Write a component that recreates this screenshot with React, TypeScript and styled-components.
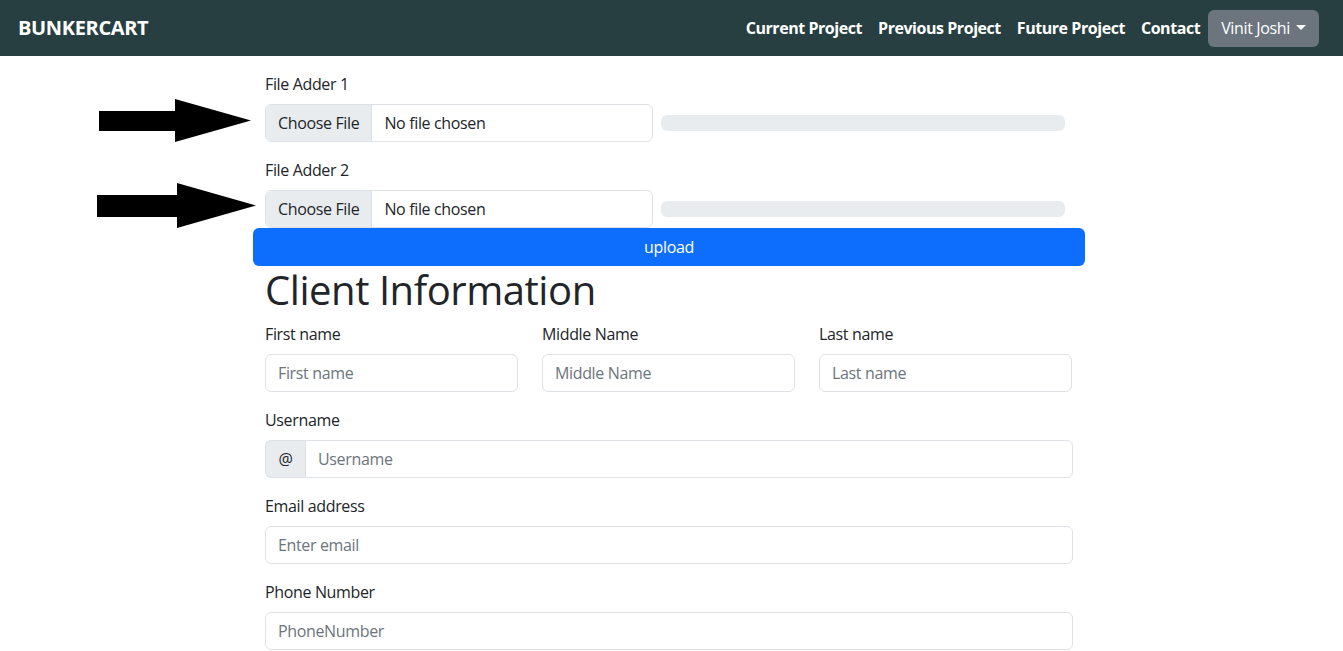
import React from "react";
import styled, { createGlobalStyle } from "styled-components";

const FONT = `"Segoe UI", "Open Sans", "Noto Sans", sans-serif`;

const Global = createGlobalStyle`
  * { box-sizing: border-box; }
  body {
    margin: 0;
    font-family: ${FONT};
    font-size: 16px;
    line-height: 1.5;
    letter-spacing: -0.35px;
    color: #212529;
    background: #fff;
  }
  input, button { letter-spacing: inherit; }
`;

const Nav = styled.nav`
  height: 56px;
  background: #283f42;
  display: flex;
  align-items: center;
  justify-content: space-between;
  padding: 0 24px 0 18px;
`;

const Brand = styled.a`
  color: #fff;
  font-weight: 700;
  font-size: 20px;
  text-decoration: none;
`;

const NavLinks = styled.div`
  display: flex;
  align-items: center;
`;

const NavLink = styled.a`
  color: #fff;
  font-weight: 700;
  padding: 8px;
  text-decoration: none;
  letter-spacing: -0.45px;
`;

const UserButton = styled.button`
  display: flex;
  align-items: center;
  gap: 4px;
  height: 37px;
  padding: 0 13px;
  border: none;
  border-radius: 6px;
  background: #6c757d;
  color: #fff;
  font-family: ${FONT};
  font-size: 16px;
`;

const Caret = styled.span`
  width: 0;
  height: 0;
  border-left: 5px solid transparent;
  border-right: 5px solid transparent;
  border-top: 5px solid #fff;
  margin-left: 2px;
  margin-top: -2px;
`;

const Main = styled.main`
  width: 832px;
  margin-left: 253px;
  padding-top: 16px;
`;

const Section = styled.div`
  padding: 0 12px;
`;

const Field = styled.div<{ $mb?: number }>`
  margin-bottom: ${(p) => (p.$mb ?? 16)}px;
`;

const Label = styled.label`
  display: block;
  margin-bottom: 8px;
`;

const FileRow = styled.div`
  position: relative;
  display: flex;
  align-items: center;
  gap: 8px;
`;

const FileBox = styled.label`
  display: flex;
  width: 388px;
  height: 38px;
  border: 1px solid #dee2e6;
  border-radius: 6px;
  overflow: hidden;
  background: #fff;
`;

const ChooseBtn = styled.span`
  display: flex;
  align-items: center;
  padding: 0 12px;
  background: #e9ecef;
  border-right: 1px solid #dee2e6;
  color: #212529;
`;

const FileName = styled.span`
  display: flex;
  align-items: center;
  padding: 0 12px;
`;

const Progress = styled.div`
  width: 404px;
  height: 16px;
  border-radius: 6px;
  background: #e9ecef;
`;

const ArrowSvg = styled.svg<{ $left: number; $top: number }>`
  position: absolute;
  left: ${(p) => p.$left}px;
  top: ${(p) => p.$top}px;
`;

const UploadButton = styled.button`
  display: block;
  width: 100%;
  height: 38px;
  border: none;
  border-radius: 6px;
  background: #0d6efd;
  color: #fff;
  font-family: ${FONT};
  font-size: 16px;
`;

const Heading = styled.h1`
  font-size: 40px;
  font-weight: 500;
  line-height: 1.2;
  letter-spacing: -0.45px;
  margin: 0 0 8px;
`;

const Grid3 = styled.div`
  display: grid;
  grid-template-columns: repeat(3, 253px);
  column-gap: 24px;
  margin-bottom: 16px;
`;

const Input = styled.input`
  display: block;
  width: 100%;
  height: 38px;
  padding: 6px 12px;
  border: 1px solid #dee2e6;
  border-radius: 6px;
  font-family: ${FONT};
  font-size: 16px;
  color: #212529;
  &::placeholder { color: #6c757d; }
`;

const InputGroup = styled.div`
  display: flex;
  width: 808px;
  & > input {
    border-top-left-radius: 0;
    border-bottom-left-radius: 0;
  }
`;

const Addon = styled.span`
  display: flex;
  align-items: center;
  justify-content: center;
  width: 40px;
  height: 38px;
  flex-shrink: 0;
  background: #e9ecef;
  border: 1px solid #dee2e6;
  border-right: none;
  border-radius: 6px 0 0 6px;
`;

const Wide = styled.div`
  width: 808px;
`;

function Arrow({ left, top, w, h, shaftTop, shaftBottom, base }: { left: number; top: number; w: number; h: number; shaftTop: number; shaftBottom: number; base: number }) {
  const mid = h / 2;
  return (
    <ArrowSvg $left={left} $top={top} width={w} height={h} viewBox={`0 0 ${w} ${h}`}>
      <polygon
        points={`0,${shaftTop} ${base},${shaftTop} ${base},0 ${w},${mid} ${base},${h} ${base},${shaftBottom} 0,${shaftBottom}`}
        fill="#000"
      />
    </ArrowSvg>
  );
}

function FileAdder({ label, mb, arrow }: { label: string; mb: number; arrow: React.ReactNode }) {
  return (
    <Field $mb={mb}>
      <Label>{label}</Label>
      <FileRow>
        {arrow}
        <FileBox>
          <ChooseBtn>Choose File</ChooseBtn>
          <FileName>No file chosen</FileName>
        </FileBox>
        <Progress />
      </FileRow>
    </Field>
  );
}

export default function App() {
  return (
    <>
      <Global />
      <Nav>
        <Brand href="#">BUNKERCART</Brand>
        <NavLinks>
          <NavLink href="#">Current Project</NavLink>
          <NavLink href="#">Previous Project</NavLink>
          <NavLink href="#">Future Project</NavLink>
          <NavLink href="#">Contact</NavLink>
          <UserButton>
            Vinit Joshi <Caret />
          </UserButton>
        </NavLinks>
      </Nav>
      <Main>
        <Section>
          <FileAdder
            label="File Adder 1"
            mb={16}
            arrow={<Arrow left={-166} top={-5} w={152} h={43} shaftTop={12} shaftBottom={32} base={76} />}
          />
          <FileAdder
            label="File Adder 2"
            mb={0}
            arrow={<Arrow left={-168} top={-7} w={159} h={45} shaftTop={12} shaftBottom={34} base={80} />}
          />
        </Section>
        <UploadButton>upload</UploadButton>
        <Section>
          <Heading>Client Information</Heading>
          <Grid3>
            <div>
              <Label>First name</Label>
              <Input placeholder="First name" />
            </div>
            <div>
              <Label>Middle Name</Label>
              <Input placeholder="Middle Name" />
            </div>
            <div>
              <Label>Last name</Label>
              <Input placeholder="Last name" />
            </div>
          </Grid3>
          <Field>
            <Label>Username</Label>
            <InputGroup>
              <Addon>@</Addon>
              <Input placeholder="Username" />
            </InputGroup>
          </Field>
          <Field>
            <Label>Email address</Label>
            <Wide>
              <Input placeholder="Enter email" />
            </Wide>
          </Field>
          <Field>
            <Label>Phone Number</Label>
            <Wide>
              <Input placeholder="PhoneNumber" />
            </Wide>
          </Field>
        </Section>
      </Main>
    </>
  );
}
